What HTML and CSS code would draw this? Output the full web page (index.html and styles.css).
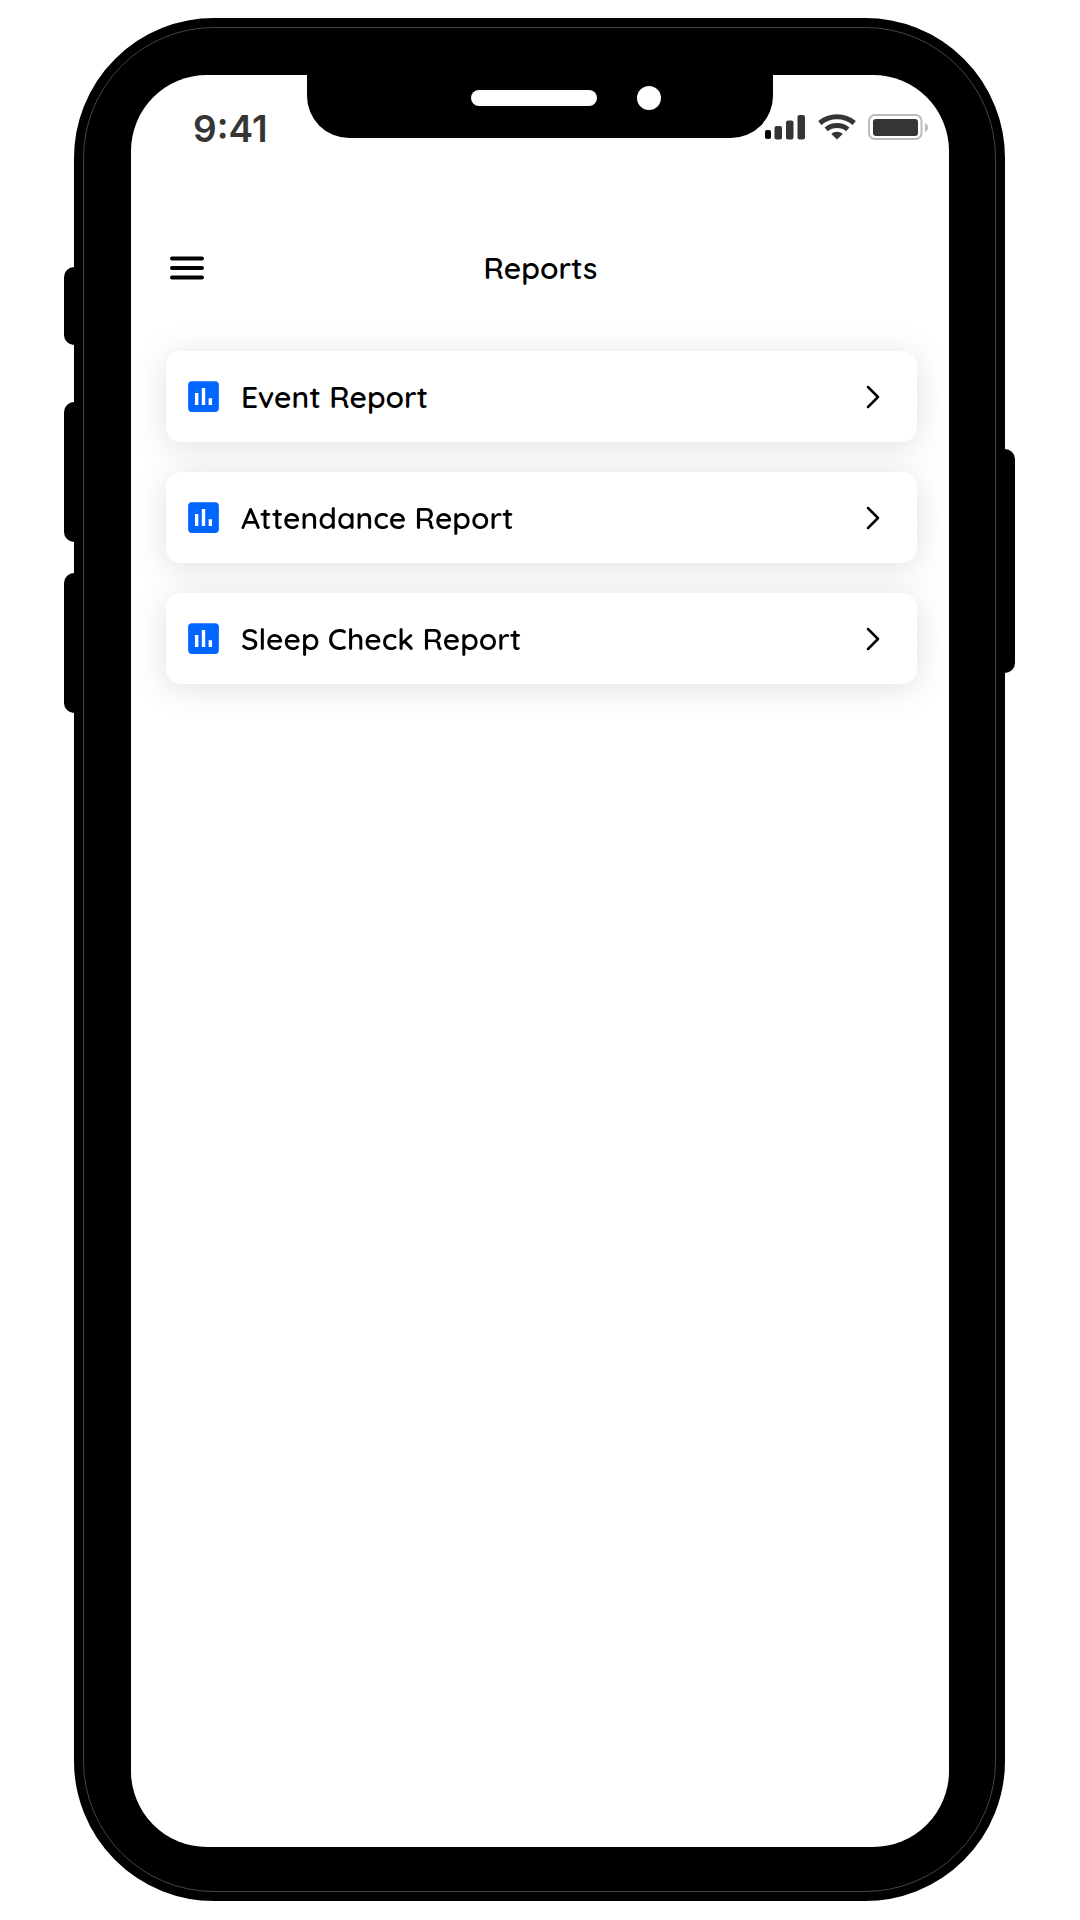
FILE: index.html
```html
<!DOCTYPE html>
<html lang="en">
<head>
    <meta charset="UTF-8">
    <meta name="viewport" content="width=device-width, initial-scale=1.0">
    <title>Reports</title>
    <link rel="stylesheet" href="styles.css">
</head>
<body>
    <div class="phone">
        <span class="side-btn mute"></span>
        <span class="side-btn volume-up"></span>
        <span class="side-btn volume-down"></span>
        <span class="side-btn power"></span>

        <div class="bezel">
            <div class="screen">
                <div class="notch">
                    <span class="speaker"></span>
                    <span class="camera"></span>
                </div>

                <div class="status-bar">
                    <span class="time">9:41</span>
                    <div class="status-icons">
                        <svg width="42" height="26" viewBox="0 0 42 26" fill="#353535">
                            <rect x="1" y="16" width="6" height="9" rx="2" fill="#000"/>
                            <rect x="10.5" y="12" width="7.5" height="13.5" rx="2"/>
                            <rect x="22" y="6.5" width="7.5" height="19" rx="2"/>
                            <rect x="33.5" y="1" width="7.5" height="24.5" rx="2"/>
                        </svg>
                        <svg width="38" height="26" viewBox="0 0 38 26" fill="none" stroke="#353535" stroke-width="5">
                            <path d="M1.8 9C11.5 .8 26.5 .8 36.2 9"/>
                            <path d="M8.2 15.4C14.3 10.200 23.7 10.200 29.8 15.4"/>
                            <path d="M13.3 19.9C16.3 16.9 21.7 16.9 24.7 19.9L19 25.5Z" fill="#353535" stroke="none"/>
                        </svg>
                        <svg width="61" height="26" viewBox="0 0 61 26">
                            <rect x="1" y="1" width="52.5" height="24" rx="6" fill="none" stroke="#bcbcbc" stroke-width="2"/>
                            <rect x="5" y="5" width="45" height="17" rx="3" fill="#353535"/>
                            <path d="M57 9C61 10.5 61 16.5 57 18Z" fill="#bcbcbc"/>
                        </svg>
                    </div>
                </div>

                <header class="app-header">
                    <button type="button" class="menu-btn" aria-label="Menu">
                        <svg width="34" height="24" viewBox="0 0 34 24" stroke="#000" stroke-width="4" stroke-linecap="round">
                            <path d="M2 2.5H32M2 12H32M2 21.5H32"/>
                        </svg>
                    </button>
                    <h1>Reports</h1>
                </header>

                <main class="report-list">
                    <a href="#event" class="report-card">
                        <svg class="report-icon" viewBox="0 0 24 24"><path d="M19 3H5c-1.1 0-2 .9-2 2v14c0 1.1.9 2 2 2h14c1.1 0 2-.9 2-2V5c0-1.1-.9-2-2-2zM9 17H7v-7h2v7zm4 0h-2V7h2v10zm4 0h-2v-4h2v4z"/></svg>
                        <span>Event Report</span>
                        <svg class="arrow" viewBox="0 0 14 24"><path d="M2 2L12 12L2 22"/></svg>
                    </a>
                    <a href="#attendance" class="report-card">
                        <svg class="report-icon" viewBox="0 0 24 24"><path d="M19 3H5c-1.1 0-2 .9-2 2v14c0 1.1.9 2 2 2h14c1.1 0 2-.9 2-2V5c0-1.1-.9-2-2-2zM9 17H7v-7h2v7zm4 0h-2V7h2v10zm4 0h-2v-4h2v4z"/></svg>
                        <span>Attendance Report</span>
                        <svg class="arrow" viewBox="0 0 14 24"><path d="M2 2L12 12L2 22"/></svg>
                    </a>
                    <a href="#sleep-check" class="report-card">
                        <svg class="report-icon" viewBox="0 0 24 24"><path d="M19 3H5c-1.1 0-2 .9-2 2v14c0 1.1.9 2 2 2h14c1.1 0 2-.9 2-2V5c0-1.1-.9-2-2-2zM9 17H7v-7h2v7zm4 0h-2V7h2v10zm4 0h-2v-4h2v4z"/></svg>
                        <span>Sleep Check Report</span>
                        <svg class="arrow" viewBox="0 0 14 24"><path d="M2 2L12 12L2 22"/></svg>
                    </a>
                </main>
            </div>
        </div>
    </div>
</body>
</html>
```
FILE: styles.css
```css
* {
    margin: 0;
    padding: 0;
    box-sizing: border-box;
}

body {
    background-color: #fff;
    color: #000;
    font-family: 'Quicksand', 'Lato', sans-serif;
    min-height: 100vh;
    display: flex;
    padding: 18px 75px 19px 74px;
}

svg {
    display: block;
    flex-shrink: 0;
}

/* Phone frame */
.phone {
    position: relative;
    flex: 1;
    display: flex;
    background-color: #000;
    border: 9px solid #000;
    border-radius: 140px;
}

.bezel {
    flex: 1;
    display: flex;
    border: 1px solid #444;
    border-radius: 131px;
    padding: 47px 46px 44px 47px;
}

.side-btn {
    position: absolute;
    left: -19px;
    width: 10px;
    background-color: #000;
    border-radius: 10px 0 0 10px;
}

.mute { top: 240px; height: 78px; }
.volume-up { top: 375px; height: 140px; }
.volume-down { top: 546px; height: 140px; }

.power {
    top: 422px;
    left: auto;
    right: -19px;
    height: 224px;
    border-radius: 0 10px 10px 0;
}

.screen {
    position: relative;
    flex: 1;
    background-color: #fff;
    border-radius: 76px;
    overflow: hidden;
}

/* Notch */
.notch {
    position: absolute;
    top: 0;
    left: 50%;
    width: 466px;
    height: 63px;
    margin-left: -233px;
    background-color: #000;
    border-radius: 0 0 42px 42px;
}

.speaker {
    position: absolute;
    top: 15px;
    left: 164px;
    width: 126px;
    height: 16px;
    background-color: #fff;
    border-radius: 8px;
}

.camera {
    position: absolute;
    top: 11px;
    left: 330px;
    width: 24px;
    height: 24px;
    background-color: #fff;
    border-radius: 50%;
}

/* Status bar */
.status-bar {
    display: flex;
    justify-content: space-between;
    align-items: flex-start;
    padding: 39px 20px 0 62px;
}

.time {
    font-family: 'Inter', sans-serif;
    font-size: 37px;
    font-weight: 600;
    line-height: 30px;
    color: #353535;
}

.status-icons {
    display: flex;
    align-items: center;
    gap: 12px;
}

/* Header */
.app-header {
    display: grid;
    grid-template-columns: 34px 1fr 34px;
    align-items: center;
    margin-top: 104px;
    padding: 0 38px 0 39px;
}

.menu-btn {
    background: none;
    border: none;
    cursor: pointer;
}

.app-header h1 {
    font-size: 30px;
    font-weight: 600;
    line-height: 40px;
    text-align: center;
}

/* Report cards */
.report-list {
    display: flex;
    flex-direction: column;
    gap: 30px;
    padding: 63px 32px 0 35px;
    filter: drop-shadow(0 4px 16px rgba(0, 0, 0, 0.12));
}

.report-card {
    display: flex;
    align-items: center;
    gap: 17px;
    height: 91px;
    padding: 0 37px 0 17px;
    background-color: #fff;
    border-radius: 15px;
    color: #000;
    font-size: 30px;
    font-weight: 600;
    text-decoration: none;
}

.report-icon {
    width: 41px;
    height: 41px;
    fill: #0066ff;
}

.arrow {
    width: 14px;
    height: 24px;
    margin-left: auto;
    fill: none;
    stroke: #000;
    stroke-width: 2.5;
    stroke-linecap: round;
    stroke-linejoin: round;
}
```
